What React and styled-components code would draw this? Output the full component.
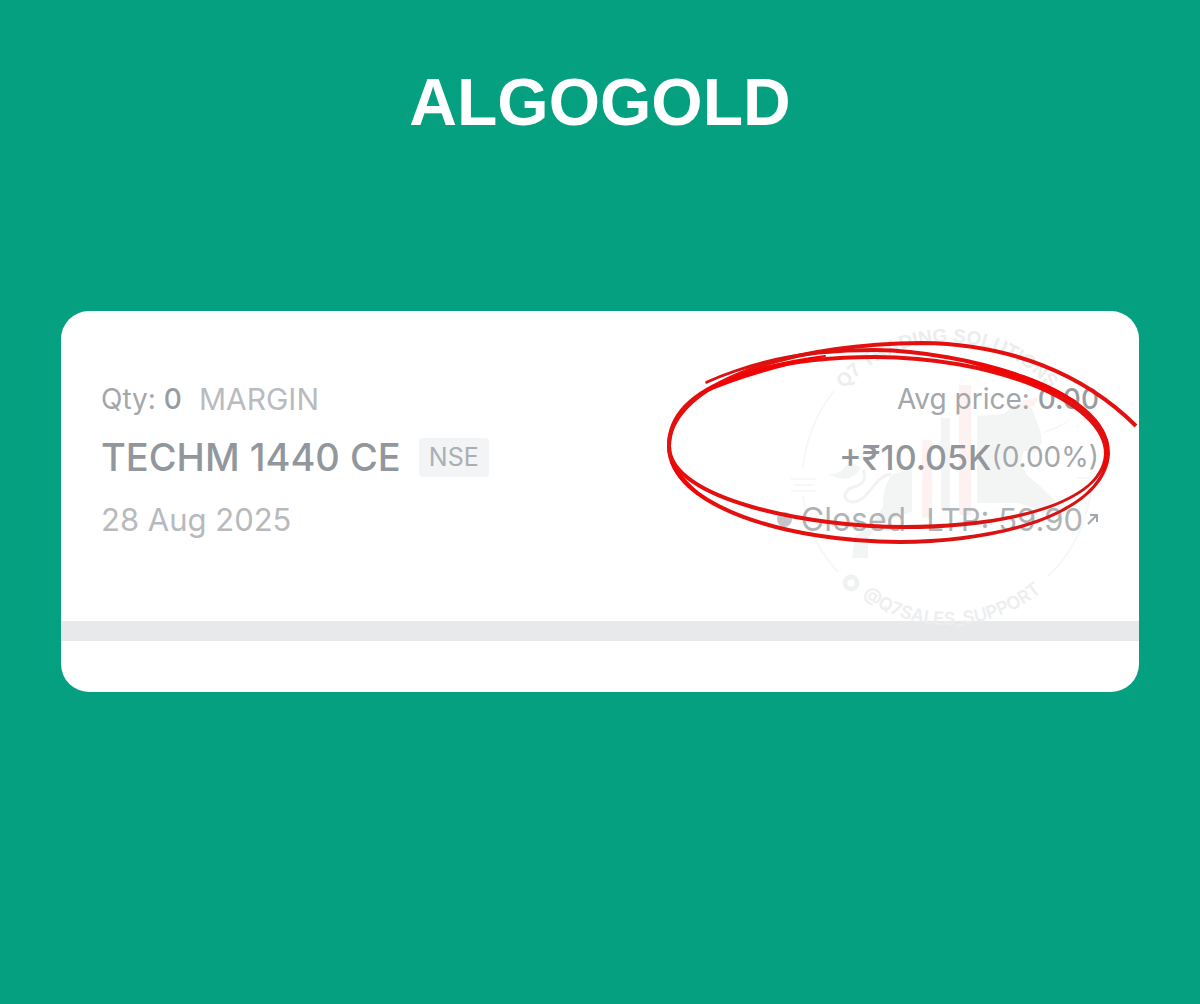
import React from "react";
import styled, { createGlobalStyle } from "styled-components";

const position = {
	qty: "0",
	product: "MARGIN",
	name: "TECHM 1440 CE",
	exchange: "NSE",
	expiry: "28 Aug 2025",
	avgPrice: "0.00",
	pnl: "+₹10.05K",
	pnlPercent: "(0.00%)",
	status: "Closed",
	ltp: "59.90",
};

const Watermark = () => (
	<Overlay viewBox="659 311 480 381" aria-hidden="true">
		<defs>
			<path id="topArc" d="M811 478 A136 136 0 0 1 1083 478" />
			<path id="bottomArc" d="M801 478 A147 147 0 0 0 1095 478" />
		</defs>
		<g fill="none" stroke="#f6f7f7" strokeWidth="2">
			<path d="M834 391 Q807 425 803 468 M803 496 Q808 540 838 572" />
			<path d="M1048 576 Q1082 545 1091 492 M1078 478 H1090" />
			<path d="M791 479 H816 M791 491 H816 M794 485 H813" />
		</g>
		<g fill="#f3f5f5">
			<path d="M893 474 L912 468 V512 L880 524 L868 538 L868 558 H852 L855 536 L864 529 Q876 520 883 506 Q883 484 893 474 Z" />
			<path d="M977 416 L1004 414 L1014 405 L1032 408 L1040 430 L1042 442 L1036 452 L1024 451 L1020 464 L1028 476 L1040 486 L1062 508 L1058 516 L1018 503 L977 503 Z" />
			<path d="M828 475 Q843 473 846 465 Q856 462 861 468 Q852 482 838 478 Z" />
			<rect x="941" y="418" width="9" height="92" />
		</g>
		<path
			d="M891 474 C874 476 868 503 852 502 C840 500 845 489 854 487 C864 484 867 478 863 470"
			fill="none"
			stroke="#f1f3f3"
			strokeWidth="3"
		/>
		<g fill="#fdf1f1">
			<rect x="922" y="440" width="10" height="78" />
			<rect x="959" y="385" width="12" height="130" />
			<path d="M1016 409 Q1022 397 1038 398 L1033 407 Z" />
			<path d="M1040 434 Q1056 427 1070 420 Q1060 429 1043 433 Z" />
		</g>
		<ArcTitle>
			<textPath href="#topArc" startOffset="50%" textAnchor="middle">
				Q7 TRADING SOLUTIONS
			</textPath>
		</ArcTitle>
		<ArcHandle>
			<textPath href="#bottomArc" startOffset="51%" textAnchor="middle">
				@Q7SALES_SUPPORT
			</textPath>
		</ArcHandle>
		<circle cx="851" cy="583" r="6" fill="none" stroke="#f0f2f2" strokeWidth="5" />
	</Overlay>
);

const Scribble = () => (
	<Overlay viewBox="659 311 480 381" aria-hidden="true">
		{/* strands of even width */}
		<g fill="none" stroke="#e3100f" strokeWidth="4">
			<path d="M875 350 C960 351 1109 387 1108 454" />
			<path d="M900 542 C790 542 669 507 669 446 C669 380 780 357 875 357 C990 357 1106 400 1106 454" />
			<path d="M905 527 C810 527 669 500 669 446 C669 392 765 345 922 343 C1010 344 1084 374 1136 426" />
		</g>
		{/* strands that get thinner */}
		<g fill="#d91212">
			<path d="M705 382 L706 381 C765 355 820 348 875 348 V352 C820 352 765 358 706 384 Z" />
			<path d="M900 540 C1000 540 1103 512 1106 454 H1110 C1106 514 1000 544 900 544 Z" />
			<path d="M905 525 C1000 525 1101 505 1104 454 H1108 C1103 507 1000 529 905 529 Z" />
		</g>
		{/* places where the strands run together */}
		<g fill="#f00504" stroke="#f00504" strokeWidth="2" strokeLinejoin="round">
			<path d="M965 361 Q1030 373 1075 401 Q1025 379 965 361 Z" />
			<path d="M671 462 Q680 484 704 498 Q684 482 671 462 Z" />
			<path d="M700 394 Q745 366 825 356 Q750 372 700 394 Z" />
			<path d="M1107 440 Q1110 456 1104 470 Q1106 456 1107 440 Z" />
		</g>
	</Overlay>
);

const PositionCard = () => (
	<Card>
		<Watermark />
		<Details>
			<Column>
				<Row $gap={17}>
					<Label>
						Qty: <b>{position.qty}</b>
					</Label>
					<Product>{position.product}</Product>
				</Row>
				<NameRow $gap={18}>
					<Name>{position.name}</Name>
					<Badge>{position.exchange}</Badge>
				</NameRow>
				<Row>
					<Expiry>{position.expiry}</Expiry>
				</Row>
			</Column>
			<Column $end>
				<Row>
					<Label>
						Avg price: <b>{position.avgPrice}</b>
					</Label>
				</Row>
				<NameRow>
					<Pnl>{position.pnl}</Pnl>
					<Percent>{position.pnlPercent}</Percent>
				</NameRow>
				<Row $gap={20}>
					<Status>
						<Dot />
						{position.status}
					</Status>
					<Ltp>
						LTP: {position.ltp}
						<svg width="12" height="12" viewBox="0 0 12 12" aria-hidden="true">
							<path d="M1 11 L10 2 M3 2 H10 V9" fill="none" stroke="#a3a7ab" strokeWidth="2" />
						</svg>
					</Ltp>
				</Row>
			</Column>
		</Details>
		<Divider />
		<Scribble />
	</Card>
);

const App = () => {
	return (
		<>
			<GlobalStyle />
			<Page>
				<Title>ALGOGOLD</Title>
				<PositionCard />
			</Page>
		</>
	);
};

export default App;

const GlobalStyle = createGlobalStyle`
	* {
		box-sizing: border-box;
	}
	body {
		margin: 0;
		background-color: #04a080;
		font-family: "Inter", "Noto Sans", sans-serif;
	}
`;

const Page = styled.main`
	min-height: 100vh;
	padding: 64px 61px;
`;

const Title = styled.h1`
	margin: 0 0 171px;
	font-family: "Liberation Sans", Arial, sans-serif;
	font-weight: 700;
	font-size: 66px;
	line-height: 76px;
	text-align: center;
	color: #ffffff;
`;

const Card = styled.section`
	position: relative;
	padding: 64px 0 51px;
	border-radius: 28px;
	overflow: hidden;
	background-color: #ffffff;
`;

const Overlay = styled.svg`
	position: absolute;
	top: 0;
	right: 0;
	width: 480px;
	height: 381px;
	pointer-events: none;
`;

const ArcTitle = styled.text`
	font-family: "Liberation Sans", Arial, sans-serif;
	font-weight: 700;
	font-size: 19px;
	fill: #ebedee;
`;

const ArcHandle = styled.text`
	font-weight: 600;
	font-size: 18px;
	fill: #eceeef;
`;

const Details = styled.div`
	position: relative;
	display: flex;
	justify-content: space-between;
	padding: 0 40px;
	height: 246px;
`;

const Column = styled.div`
	display: flex;
	flex-direction: column;
	align-items: ${(props) => (props.$end ? "flex-end" : "flex-start")};
`;

const Row = styled.div`
	display: flex;
	align-items: center;
	gap: ${(props) => props.$gap || 0}px;
	height: 48px;
	white-space: nowrap;
`;

const NameRow = styled(Row)`
	height: 68px;
	margin-bottom: 4px;
`;

const Label = styled.span`
	font-size: 28px;
	color: #a3a7aa;

	b {
		font-weight: 500;
		color: #989ca1;
	}
`;

const Product = styled.span`
	font-size: 30px;
	color: #b9bbbe;
`;

const Name = styled.h2`
	margin: 0;
	font-weight: 500;
	font-size: 38px;
	color: #91979d;
`;

const Badge = styled.span`
	padding: 0 10px;
	border-radius: 4px;
	font-size: 25px;
	line-height: 39px;
	color: #abafb4;
	background-color: #f3f4f6;
`;

const Expiry = styled.span`
	font-size: 31px;
	color: #b7babc;
`;

const Pnl = styled.strong`
	font-weight: 500;
	font-size: 34px;
	color: #92969a;
`;

const Percent = styled.span`
	font-size: 28px;
	color: #a3a7aa;
`;

const Status = styled.span`
	display: flex;
	align-items: center;
	gap: 9px;
	font-size: 32px;
	color: #b0b3b6;
`;

const Dot = styled.i`
	width: 15px;
	height: 15px;
	border-radius: 50%;
	background-color: #c3c5c8;
`;

const Ltp = styled(Status)`
	gap: 4px;
	font-size: 31px;
`;

const Divider = styled.hr`
	height: 20px;
	margin: 0;
	border: none;
	background-color: #e8e9eb;
`;
